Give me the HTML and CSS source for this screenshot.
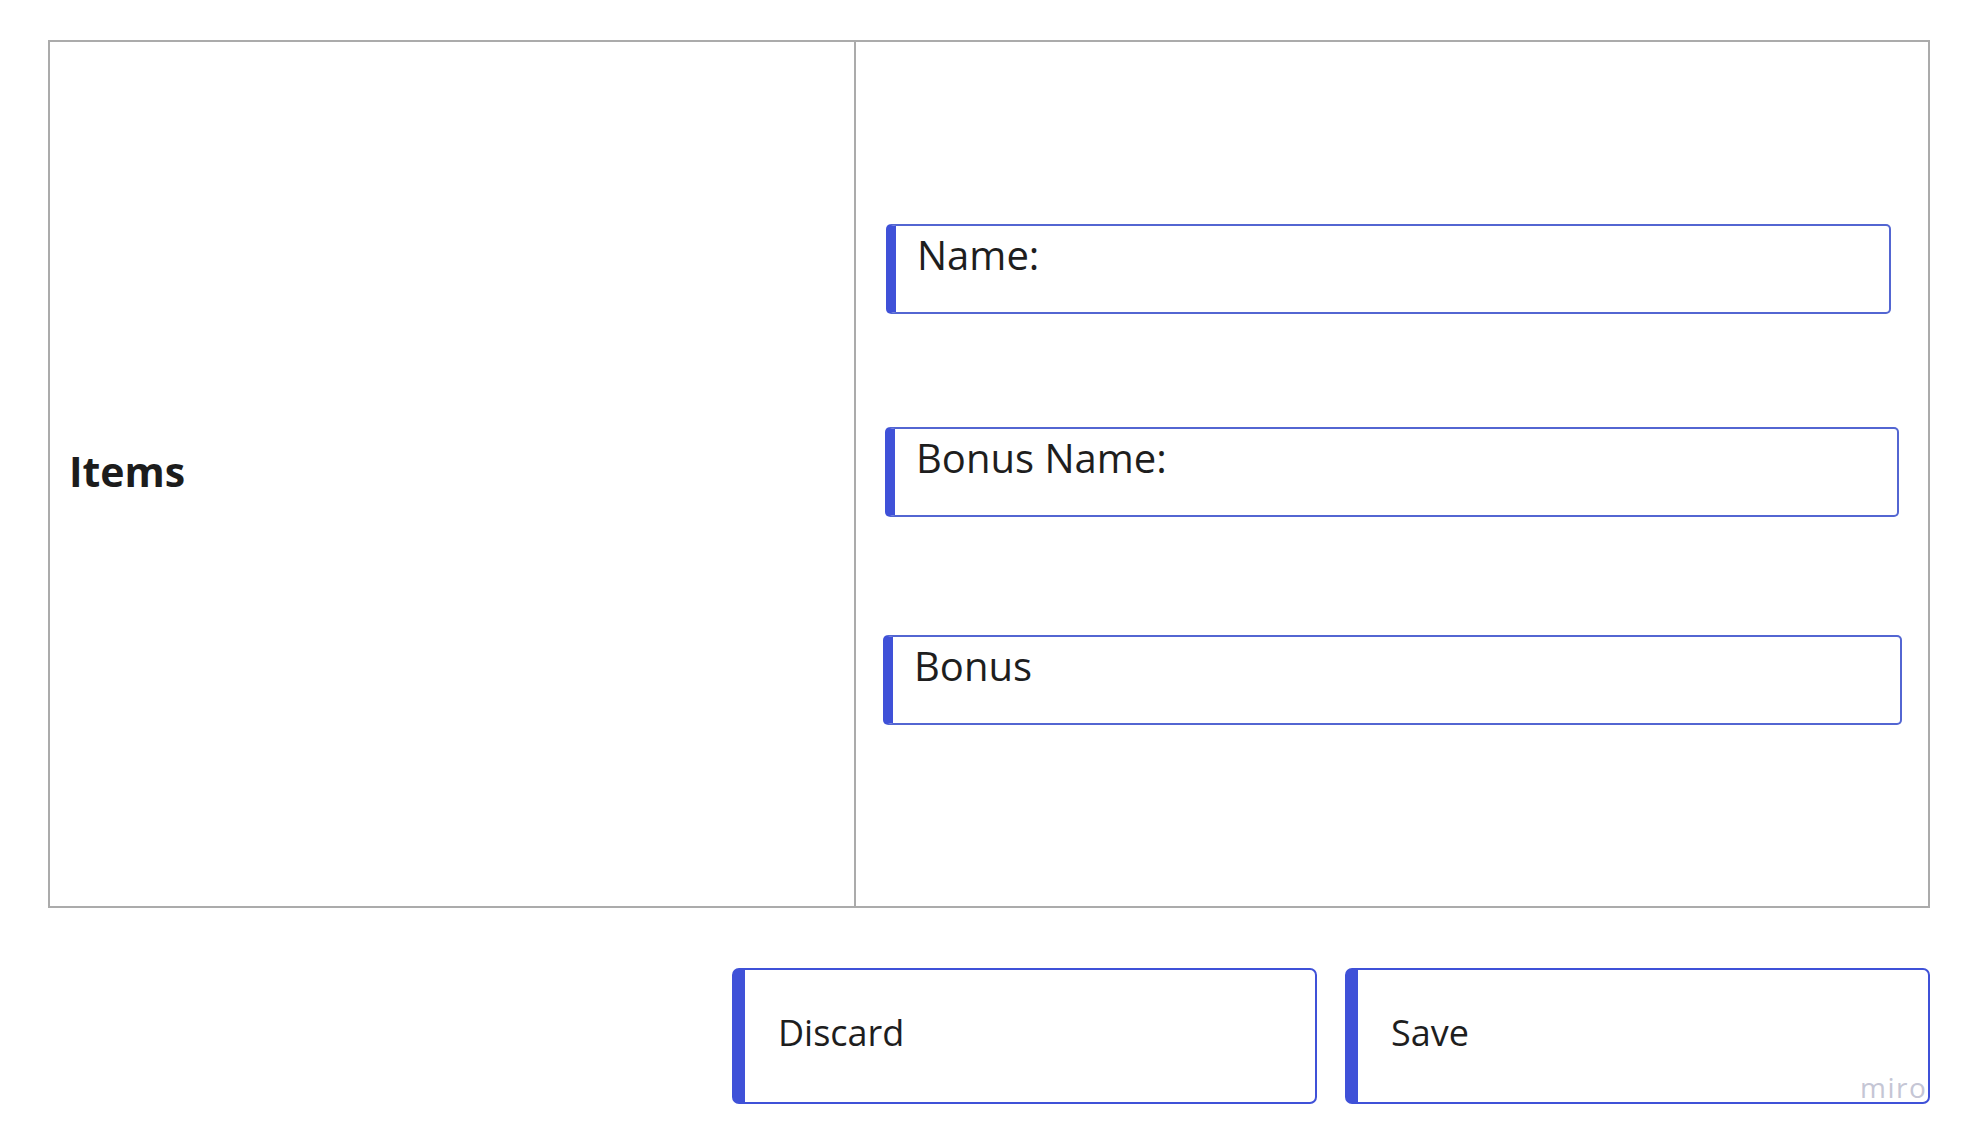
FILE: index.html
```html
<!DOCTYPE html>
<html lang="en">
<head>
<meta charset="utf-8">
<title>Items</title>
<link rel="stylesheet" href="styles.css">
</head>
<body>
<div class="page">
  <div class="panel">
    <div class="panel-title">Items</div>
    <div class="panel-form">
      <div class="field field-name">Name:</div>
      <div class="field field-bonus-name">Bonus Name:</div>
      <div class="field field-bonus">Bonus</div>
    </div>
  </div>
  <div class="actions">
    <div class="btn">Discard</div>
    <div class="btn">Save</div>
  </div>
</div>
<div class="watermark">miro</div>
</body>
</html>
```
FILE: styles.css
```css
* { box-sizing: border-box; }
html, body { margin: 0; padding: 0; background: #ffffff; }
body {
  font-family: "Open Sans", "Noto Sans", sans-serif;
  color: #1f1f1f;
  width: 1967px;
  height: 1143px;
  position: relative;
  overflow: hidden;
}
.page {
  padding: 40px 0 0 48px;
  width: 1930px;
}
.panel {
  display: grid;
  grid-template-columns: 806px 1fr;
  height: 868px;
  border: 2px solid #ababab;
}
.panel-title {
  border-right: 2px solid #ababab;
  display: flex;
  align-items: center;
  padding: 0 0 6px 19px;
  font-weight: 700;
  font-size: 41px;
  color: #1c1c1c;
}
.panel-form {
  display: flex;
  flex-direction: column;
  align-items: flex-start;
  padding: 182px 0 0 30px;
}
.field {
  height: 90px;
  border: 2px solid #5366d2;
  border-left: 10px solid #3f51d8;
  border-radius: 5px;
  padding: 1px 0 0 21px;
  font-size: 40px;
  line-height: normal;
  color: #1e1e1e;
}
.field-name { width: 1005px; }
.field-bonus-name { width: 1014px; margin: 113px 0 0 -1px; }
.field-bonus { width: 1019px; margin: 118px 0 0 -3px; }
.actions {
  display: flex;
  justify-content: flex-end;
  gap: 28px;
  margin-top: 60px;
}
.btn {
  width: 585px;
  height: 136px;
  border: 2px solid #3f51d8;
  border-left: 13px solid #3f51d8;
  border-radius: 7px;
  display: flex;
  align-items: center;
  padding: 0 0 8px 33px;
  font-size: 36px;
  color: #1e1e1e;
}
.watermark {
  position: absolute;
  left: 1860px;
  top: 1068px;
  font-size: 28px;
  font-weight: 500;
  letter-spacing: 1.5px;
  color: #c5c6d5;
}
```
